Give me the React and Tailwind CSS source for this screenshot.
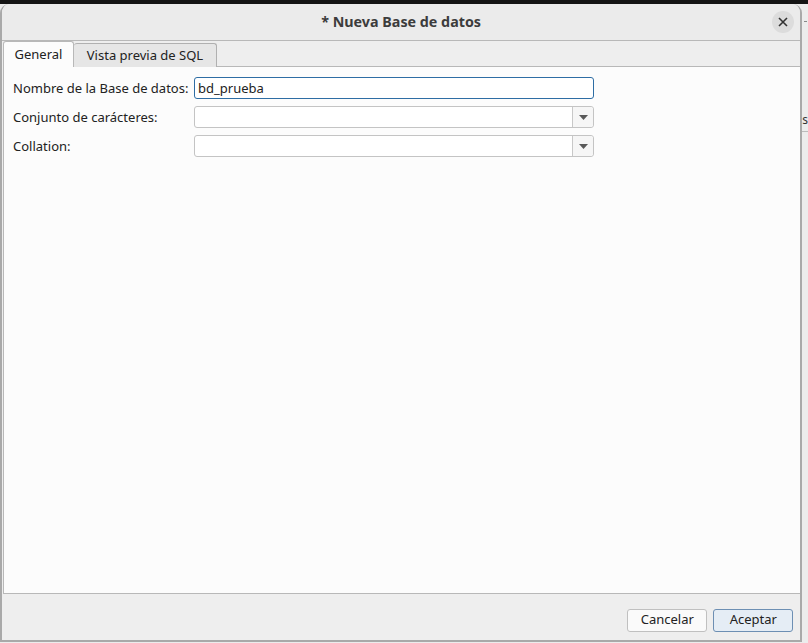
import React, { useState } from "react";

const FONT = { fontFamily: '"Noto Sans", "Open Sans", sans-serif' };

// Combo box with the small arrow button on the right
const Combo = ({ value }) => (
  <div className="flex h-[22px] w-[400px] rounded-[3px] border border-[#c4c4c4] bg-white">
    <div className="flex-1 px-[4px] text-[13px] leading-[20px] text-[#222]">{value}</div>
    <div className="flex w-[21px] items-center justify-center rounded-r-[3px] border-l border-[#c8c8c8] bg-[#f6f6f6]">
      <svg width="9" height="5" viewBox="0 0 9 5">
        <path d="M0 0h9L4.5 5z" fill="#595959" />
      </svg>
    </div>
  </div>
);

const App = () => {
  const [activeTab, setActiveTab] = useState("general");
  const [name, setName] = useState("bd_prueba");

  return (
    <div className="flex h-[643px] w-[808px] flex-col overflow-hidden bg-[#141414]" style={FONT}>
      <div className="h-[4px]" />
      <div className="flex flex-1 bg-[#ececec]">
        {/* Dialog window */}
        <div className="flex h-[638px] w-[803px] flex-col overflow-hidden rounded-t-[9px] border-x-2 border-b-2 border-[#a9a9a9] bg-[#eeeeee]">
          {/* Title bar */}
          <div className="relative flex h-[37px] shrink-0 items-center justify-center border-b border-[#b8b8b8] bg-[#ebebeb]">
            <span className="text-[14.3px] font-bold text-[#3c3c3c]">* Nueva Base de datos</span>
            <button className="absolute right-[6px] top-[7px] flex h-[22px] w-[22px] items-center justify-center rounded-full bg-[#dcdcdc]">
              <svg width="10" height="10" viewBox="0 0 10 10">
                <path d="M1 1l8 8M9 1l-8 8" stroke="#333" strokeWidth="1.6" />
              </svg>
            </button>
          </div>

          {/* Tabs */}
          <div className="flex h-[25px] shrink-0 items-end pl-[1px]">
            <button
              onClick={() => setActiveTab("general")}
              className={`relative -mb-px h-[26px] w-[71px] rounded-t-[3px] border border-b-0 border-[#b8b8b8] text-[13px] text-[#222] ${
                activeTab === "general" ? "z-10 bg-[#fcfcfc]" : "h-[24px] bg-[#e6e6e6]"
              }`}
            >
              General
            </button>
            <button
              onClick={() => setActiveTab("sql")}
              className={`relative -mb-px w-[143px] rounded-t-[3px] border border-b-0 border-l-0 border-[#b0b0b0] text-[13px] text-[#222] ${
                activeTab === "sql" ? "z-10 h-[26px] bg-[#fcfcfc]" : "h-[24px] bg-[#e6e6e6]"
              }`}
            >
              Vista previa de SQL
            </button>
          </div>

          {/* Panel */}
          <div className="ml-[1px] flex-1 border-l border-t border-b border-[#b8b8b8] bg-[#fcfcfc] pl-[9px] pt-[10px]">
            {activeTab === "general" && (
              <div className="grid grid-cols-[181px_400px] gap-y-[7px] text-[13px] text-[#222]">
                <label className="leading-[22px]">Nombre de la Base de datos:</label>
                <input
                  value={name}
                  onChange={(e) => setName(e.target.value)}
                  className="h-[22px] w-[400px] rounded-[3px] border border-[#2e6da4] bg-white px-[3px] text-[13px] text-[#222] outline-none"
                />
                <label className="leading-[22px]">Conjunto de carácteres:</label>
                <Combo value="" />
                <label className="leading-[22px]">Collation:</label>
                <Combo value="" />
              </div>
            )}
          </div>

          {/* Buttons */}
          <div className="flex h-[46px] shrink-0 items-center justify-end gap-[6px] pr-[7px] pt-[6px]">
            <button className="h-[23px] w-[80px] rounded-[3px] border border-[#c0c0c0] bg-[#fafafa] text-[13px] text-[#222]">
              Cancelar
            </button>
            <button className="h-[23px] w-[80px] rounded-[3px] border border-[#6d8fb3] bg-[#e5edf5] text-[13px] text-[#222]">
              Aceptar
            </button>
          </div>
        </div>

        {/* Sliver of the window behind */}
        <div className="flex-1 pt-[17px]">
          <div className="ml-[2px] h-px w-[3px] bg-[#888]" />
          <div className="mt-[92px] text-[12px] leading-[12px] text-[#333]">s</div>
          <div className="mt-[5px] h-px bg-[#bbb]" />
        </div>
      </div>
    </div>
  );
};

export default App;
